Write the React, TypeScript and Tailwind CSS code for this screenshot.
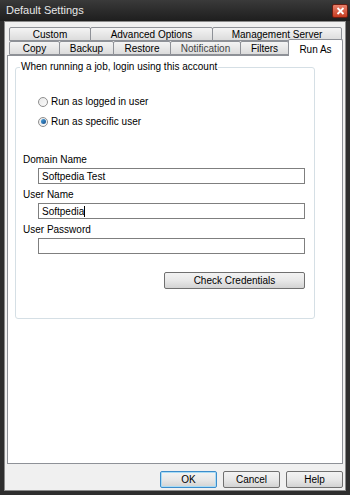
import React from "react";

const font = { fontFamily: '"Liberation Sans", Arial, sans-serif' };

function Tab({ label, w, dim = false }: { label: string; w: number; dim?: boolean }) {
  return (
    <div
      style={{ width: w }}
      className={
        "flex items-center justify-center border border-[#8e9197] rounded-t-[2px] -mr-px text-[10px] " +
        (dim ? "text-[#444] " : "text-black ") +
        "h-[14px] bg-gradient-to-b from-[#f4f4f4] to-[#dcdcdc]"
      }
    >
      {label}
    </div>
  );
}

function Radio({ checked, label }: { checked?: boolean; label: string }) {
  return (
    <div className="flex items-center gap-[3px] h-[13px]">
      <div className="w-[10px] h-[10px] rounded-full border border-[#8f8f8f] bg-gradient-to-br from-[#e8e8e8] to-[#fbfbfb] flex items-center justify-center">
        {checked && <div className="w-[5px] h-[5px] rounded-full bg-gradient-to-br from-[#4aa3e0] to-[#1a4f8a]" />}
      </div>
      <span className="text-[10px] text-black leading-none">{label}</span>
    </div>
  );
}

function Field({ label, value, caret }: { label: string; value: string; caret?: boolean }) {
  return (
    <div className="flex flex-col">
      <div className="text-[10px] leading-[12px] text-black ml-[7px]">{label}</div>
      <div className="ml-[22px] mt-[2px] w-[267px] h-[16px] border border-[#7f7f7f] bg-white flex items-center px-[3px] text-[10px] text-black">
        {value}
        {caret && <span className="inline-block w-px h-[11px] bg-black" />}
      </div>
    </div>
  );
}

function Btn({ label, w, focus = false }: { label: string; w: number; focus?: boolean }) {
  return (
    <div
      style={{ width: w }}
      className={
        "h-[17px] rounded-[2px] flex items-center justify-center text-[10px] text-black bg-gradient-to-b from-[#f3f3f3] via-[#e8e8e8] to-[#d3d3d3] border " +
        (focus ? "border-[#3c8ccb] shadow-[inset_0_0_0_1px_#a9dcf5]" : "border-[#707070]")
      }
    >
      {label}
    </div>
  );
}

export default function App() {
  return (
    <div style={font} className="w-[350px] h-[495px] bg-[#2e2e2e] flex flex-col px-[4px] pb-[4px]">
      {/* Title bar */}
      <div className="h-[21px] flex items-center justify-between bg-gradient-to-b from-[#3a3a3a] to-[#1e1e1e] -mx-[4px] px-[6px]">
        <span className="text-[11px] text-[#e8e8e8]">Default Settings</span>
        <div className="w-[16px] h-[14px] rounded-[2px] border border-[#6b1c10] bg-gradient-to-b from-[#e8806a] to-[#c53a1e] flex items-center justify-center -mr-[4px]">
          <svg width="9" height="8" viewBox="0 0 9 8">
            <path d="M1.5 1 L7.5 7 M7.5 1 L1.5 7" stroke="#fff" strokeWidth="1.8" />
          </svg>
        </div>
      </div>
      {/* Body */}
      <div className="flex-1 bg-[#f0f0f0] border border-[#8a8a8a] flex flex-col px-[2px]">
        <div className="pt-[5px] pl-[2px] flex flex-col">
          <div className="flex">
            <Tab label="Custom" w={82} />
            <Tab label="Advanced Options" w={123} />
            <Tab label="Management Server" w={130} />
          </div>
          <div className="flex items-end h-[14px]">
            <Tab label="Copy" w={51} />
            <Tab label="Backup" w={55} />
            <Tab label="Restore" w={58} />
            <Tab label="Notification" w={71} dim />
            <Tab label="Filters" w={49} />
            <div className="w-[55px] h-[17px] -mb-px z-10 border border-[#8e9197] border-b-0 rounded-t-[2px] bg-white flex items-start justify-center pt-[2px] text-[10px] text-black">
              Run As
            </div>
          </div>
        </div>
        {/* panel */}
        <div className="h-[409px] bg-white border border-[#8e9197] pl-[7px] pt-[11px]">
          <div className="relative w-[300px] h-[252px] border border-[#d5dfe5] rounded-[3px] flex flex-col">
            <span className="absolute -top-[7px] left-[4px] bg-white px-px text-[10px] leading-[12px] text-black">
              When running a job, login using this account
            </span>
            <div className="flex flex-col gap-[7px] ml-[22px] mt-[27px]">
              <Radio label="Run as logged in user" />
              <Radio label="Run as specific user" checked />
            </div>
            <div className="flex flex-col gap-[5px] mt-[26px]">
              <Field label="Domain Name" value="Softpedia Test" />
              <Field label="User Name" value="Softpedia" caret />
              <Field label="User Password" value="" />
            </div>
            <div className="flex justify-end mr-[9px] mt-[18px]">
              <Btn label="Check Credentials" w={141} />
            </div>
          </div>
        </div>
        {/* buttons */}
        <div className="flex justify-end gap-[6px] mt-[7px]">
          <Btn label="OK" w={57} focus />
          <Btn label="Cancel" w={57} />
          <Btn label="Help" w={57} />
        </div>
      </div>
    </div>
  );
}
